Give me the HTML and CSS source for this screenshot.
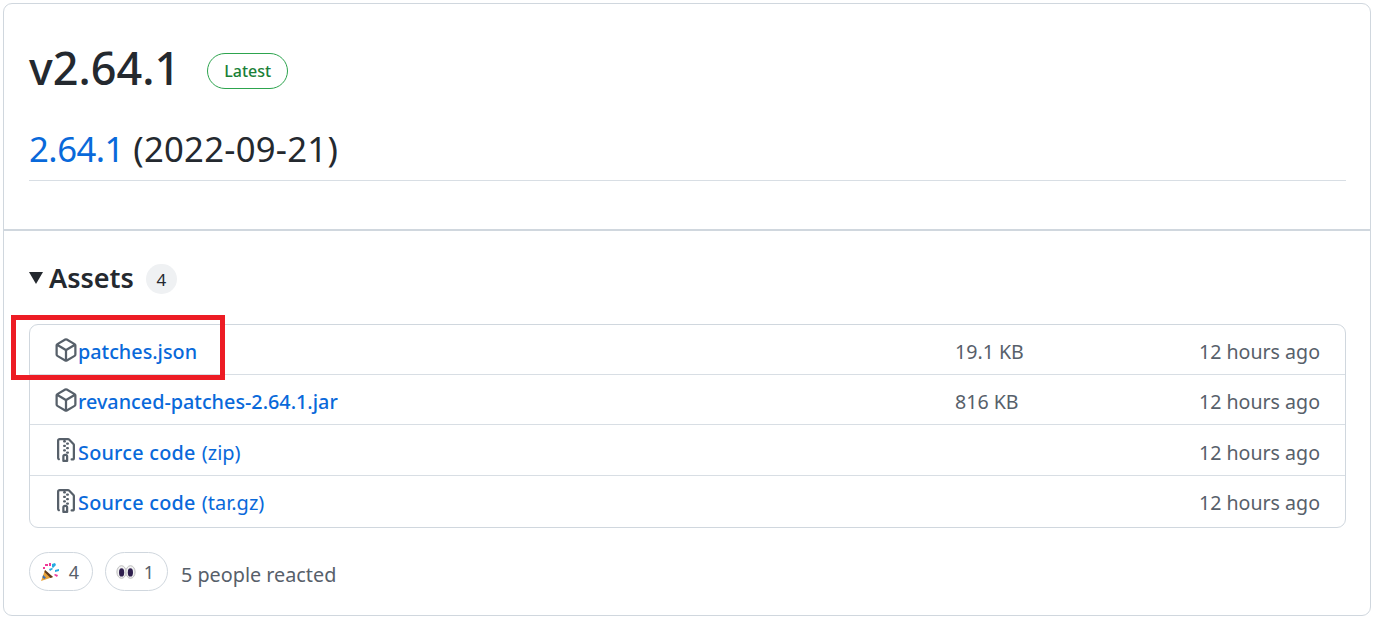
FILE: index.html
```html
<!DOCTYPE html>
<html lang="en">
<head>
<meta charset="utf-8">
<title>v2.64.1</title>
<link rel="stylesheet" href="styles.css">
</head>
<body>
<main class="card">
  <section class="head">
    <div class="title-row">
      <h1 class="title">v2.64.1</h1>
      <span class="label">Latest</span>
    </div>
    <h2 class="subtitle"><a class="link" href="#">2.64.1</a> (2022-09-21)</h2>
  </section>
  <section class="body">
    <div class="assets-head">
      <span class="caret"></span>
      <span class="assets-title">Assets</span>
      <span class="counter">4</span>
    </div>
    <ul class="assets">
      <li class="asset">
        <div class="name">
          <svg class="icon" viewBox="0 0 16 16"><path d="m8.878.392 5.25 3.045c.54.314.872.89.872 1.514v6.098a1.75 1.75 0 0 1-.872 1.514l-5.25 3.045a1.75 1.75 0 0 1-1.756 0l-5.25-3.045A1.75 1.75 0 0 1 1 11.049V4.951c0-.624.332-1.201.872-1.514L7.122.392a1.75 1.75 0 0 1 1.756 0ZM7.875 1.69l-4.63 2.685L8 7.133l4.755-2.758-4.63-2.685a.248.248 0 0 0-.25 0ZM2.5 5.677v5.372c0 .09.047.171.125.216l4.625 2.683V8.432Zm6.25 8.271 4.625-2.683a.25.25 0 0 0 .125-.216V5.677L8.75 8.432Z"/></svg>
          <a class="asset-link" href="#">patches.json</a>
        </div>
        <span class="size">19.1 KB</span>
        <span class="time">12 hours ago</span>
      </li>
      <li class="asset">
        <div class="name">
          <svg class="icon" viewBox="0 0 16 16"><path d="m8.878.392 5.25 3.045c.54.314.872.89.872 1.514v6.098a1.75 1.75 0 0 1-.872 1.514l-5.25 3.045a1.75 1.75 0 0 1-1.756 0l-5.25-3.045A1.75 1.75 0 0 1 1 11.049V4.951c0-.624.332-1.201.872-1.514L7.122.392a1.75 1.75 0 0 1 1.756 0ZM7.875 1.69l-4.63 2.685L8 7.133l4.755-2.758-4.63-2.685a.248.248 0 0 0-.25 0ZM2.5 5.677v5.372c0 .09.047.171.125.216l4.625 2.683V8.432Zm6.25 8.271 4.625-2.683a.25.25 0 0 0 .125-.216V5.677L8.75 8.432Z"/></svg>
          <a class="asset-link" href="#">revanced-patches-2.64.1.jar</a>
        </div>
        <span class="size">816 KB</span>
        <span class="time">12 hours ago</span>
      </li>
      <li class="asset">
        <div class="name">
          <svg class="icon" viewBox="0 0 16 16"><path d="M3.5 1.75v11.5c0 .09.048.173.126.217a.75.75 0 0 1-.752 1.298A1.748 1.748 0 0 1 2 13.25V1.75C2 .784 2.784 0 3.75 0h5.586c.464 0 .909.185 1.237.513l2.914 2.914c.329.328.513.773.513 1.237v8.586A1.75 1.75 0 0 1 12.25 15h-.5a.75.75 0 0 1 0-1.5h.5a.25.25 0 0 0 .25-.25V4.664a.25.25 0 0 0-.073-.177L9.513 1.573a.25.25 0 0 0-.177-.073H7.25a.75.75 0 0 1 0 1.5h-.5a.75.75 0 0 1 0-1.5h-3a.25.25 0 0 0-.25.25Zm3.75 8.75h.5c.966 0 1.75.784 1.75 1.75v3a.75.75 0 0 1-.75.75h-2.5a.75.75 0 0 1-.75-.75v-3c0-.966.784-1.75 1.75-1.75ZM6 5.25a.75.75 0 0 1 .75-.75h.5a.75.75 0 0 1 0 1.5h-.5A.75.75 0 0 1 6 5.25Zm.75 2.25h.5a.75.75 0 0 1 0 1.5h-.5a.75.75 0 0 1 0-1.5ZM8 6.75A.75.75 0 0 1 8.75 6h.5a.75.75 0 0 1 0 1.5h-.5A.75.75 0 0 1 8 6.75ZM8.75 3h.5a.75.75 0 0 1 0 1.5h-.5a.75.75 0 0 1 0-1.5ZM8 9.75A.75.75 0 0 1 8.75 9h.5a.75.75 0 0 1 0 1.5h-.5A.75.75 0 0 1 8 9.75Zm-1 2.5v2.25h1v-2.25a.25.25 0 0 0-.25-.25h-.5a.25.25 0 0 0-.25.25Z"/></svg>
          <a class="asset-link source" href="#">Source code</a>
          <a class="asset-ext" href="#">(zip)</a>
        </div>
        <span class="size"></span>
        <span class="time">12 hours ago</span>
      </li>
      <li class="asset">
        <div class="name">
          <svg class="icon" viewBox="0 0 16 16"><path d="M3.5 1.75v11.5c0 .09.048.173.126.217a.75.75 0 0 1-.752 1.298A1.748 1.748 0 0 1 2 13.25V1.75C2 .784 2.784 0 3.75 0h5.586c.464 0 .909.185 1.237.513l2.914 2.914c.329.328.513.773.513 1.237v8.586A1.75 1.75 0 0 1 12.25 15h-.5a.75.75 0 0 1 0-1.5h.5a.25.25 0 0 0 .25-.25V4.664a.25.25 0 0 0-.073-.177L9.513 1.573a.25.25 0 0 0-.177-.073H7.25a.75.75 0 0 1 0 1.5h-.5a.75.75 0 0 1 0-1.5h-3a.25.25 0 0 0-.25.25Zm3.75 8.75h.5c.966 0 1.75.784 1.75 1.75v3a.75.75 0 0 1-.75.75h-2.5a.75.75 0 0 1-.75-.75v-3c0-.966.784-1.75 1.75-1.75ZM6 5.25a.75.75 0 0 1 .75-.75h.5a.75.75 0 0 1 0 1.5h-.5A.75.75 0 0 1 6 5.25Zm.75 2.25h.5a.75.75 0 0 1 0 1.5h-.5a.75.75 0 0 1 0-1.5ZM8 6.75A.75.75 0 0 1 8.75 6h.5a.75.75 0 0 1 0 1.5h-.5A.75.75 0 0 1 8 6.75ZM8.75 3h.5a.75.75 0 0 1 0 1.5h-.5a.75.75 0 0 1 0-1.5ZM8 9.75A.75.75 0 0 1 8.75 9h.5a.75.75 0 0 1 0 1.5h-.5A.75.75 0 0 1 8 9.75Zm-1 2.5v2.25h1v-2.25a.25.25 0 0 0-.25-.25h-.5a.25.25 0 0 0-.25.25Z"/></svg>
          <a class="asset-link source" href="#">Source code</a>
          <a class="asset-ext" href="#">(tar.gz)</a>
        </div>
        <span class="size"></span>
        <span class="time">12 hours ago</span>
      </li>
    </ul>
    <div class="reactions">
      <button class="reaction" type="button">
        <svg class="emoji" viewBox="0 0 20 20">
          <path fill="#e8a33b" d="M1 19 5 8l8 7z"/>
          <path fill="#3c6fb4" d="M3.2 13 6 15.8 4.2 17 2.4 15.2z"/>
          <path fill="#5b3a23" d="M5 8l8 7-2.5 1L4.5 10z"/>
          <path fill="#ef3a9a" d="M5 2h3v2H5zM9 1h2v3H9zM3 5h2v2H3z"/>
          <path fill="#27aae1" d="M12 2l3-1 1 2-3 3-1-1zM15 8l4-1v2l-4 1zM9 7l3-1 1 1-3 2z"/>
          <path fill="#ef3a9a" d="M15 12l3 1-1 2-3-2z"/>
        </svg>
        <span class="count">4</span>
      </button>
      <button class="reaction" type="button">
        <svg class="emoji" viewBox="0 0 20 20">
          <ellipse cx="5.5" cy="10" rx="4.6" ry="6.3" fill="#f1f1f1" stroke="#bdbdbd" stroke-width="1"/>
          <ellipse cx="14.5" cy="10" rx="4.6" ry="6.3" fill="#f1f1f1" stroke="#bdbdbd" stroke-width="1"/>
          <ellipse cx="5.6" cy="10.4" rx="2.6" ry="4.2" fill="#2f1f4e"/>
          <ellipse cx="14.4" cy="10.4" rx="2.6" ry="4.2" fill="#2f1f4e"/>
        </svg>
        <span class="count">1</span>
      </button>
      <span class="reacted">5 people reacted</span>
    </div>
  </section>
  <div class="highlight"></div>
</main>
</body>
</html>
```

FILE: styles.css
```css
* { box-sizing: border-box; }
html, body { margin: 0; padding: 0; background: #fff; }
body {
  padding: 3px 7px 0 3px;
  font-family: "Noto Sans", "Open Sans", "Liberation Sans", sans-serif;
  font-size: 21px;
  color: #24292f;
}
.card {
  position: relative;
  width: 1368px;
  height: 613px;
  border: 1px solid #d0d7de;
  border-radius: 9px;
  display: flex;
  flex-direction: column;
}
.head {
  height: 227px;
  padding: 0 24px 0 25px;
  border-bottom: 2px solid #d0d7de;
}
.title-row {
  display: flex;
  align-items: center;
  height: 100px;
  padding-top: 27px;
  gap: 27px;
}
.title {
  margin: 0;
  font-size: 45px;
  font-weight: 550;
  line-height: 60px;
}
.label {
  display: flex;
  align-items: center;
  justify-content: center;
  width: 81px;
  height: 36px;
  margin-top: 7px;
  border: 1px solid #2da44e;
  border-radius: 18px;
  color: #1a7f37;
  font-size: 16px;
  font-weight: 500;
}
.subtitle {
  margin: 0;
  height: 77px;
  padding-top: 20px;
  border-bottom: 1px solid #d8dee4;
  font-size: 34.7px;
  font-weight: 400;
  line-height: 50px;
  letter-spacing: .25px;
  white-space: nowrap;
}
.link { color: #0969da; text-decoration: none; letter-spacing: -.5px; }
.body {
  flex: 1;
  padding: 0 25px;
}
.assets-head {
  display: flex;
  align-items: center;
  height: 93px;
}
.caret {
  width: 0;
  height: 0;
  margin-right: 6px;
  border-left: 7px solid transparent;
  border-right: 7px solid transparent;
  border-top: 12px solid #24292f;
}
.assets-title {
  font-size: 27px;
  font-weight: 600;
}
.counter {
  display: flex;
  align-items: center;
  justify-content: center;
  width: 31px;
  height: 30px;
  margin-left: 12px;
  margin-top: 3px;
  border-radius: 15px;
  background: #eff1f3;
  font-size: 17px;
}
.assets {
  list-style: none;
  margin: 0;
  padding: 0;
  width: 1317px;
  border: 1px solid #d0d7de;
  border-radius: 9px;
}
.asset {
  display: grid;
  grid-template-columns: 901px 174px 1fr;
  align-items: center;
  height: 50px;
  padding: 0 25px 0 24px;
  border-top: 1px solid #d8dee4;
}
.asset:first-child { border-top: 0; height: 49px; }
.asset:nth-child(3) { height: 51px; }
.asset:last-child { height: 52px; padding-bottom: 2px; }
.name {
  display: flex;
  align-items: center;
  white-space: nowrap;
}
.icon {
  width: 24px;
  height: 24px;
  flex: none;
  fill: #57606a;
}
.asset-link {
  padding-top: 4px;
  color: #0969da;
  font-weight: 500;
  font-size: 19.8px;
  text-decoration: none;
}
.source { letter-spacing: .25px; }
.asset-ext {
  padding-top: 4px;
  margin-left: 6px;
  color: #0969da;
  font-size: 20px;
  text-decoration: none;
}
.size, .time {
  padding-top: 4px;
  color: #57606a;
  font-size: 19.6px;
  white-space: nowrap;
}
.time { text-align: right; }
.reactions {
  display: flex;
  align-items: center;
  margin-top: 24px;
  gap: 12px;
}
.reaction {
  display: flex;
  align-items: center;
  justify-content: space-between;
  width: 64px;
  height: 39px;
  padding: 0 13px 0 10px;
  background: #fff;
  border: 1px solid #d0d7de;
  border-radius: 20px;
  font-family: inherit;
  font-size: 18px;
  color: #57606a;
}
.reaction + .reaction { width: 63px; }
.emoji { width: 20px; height: 20px; flex: none; }
.reacted {
  padding-top: 6px;
  margin-left: 1px;
  color: #57606a;
  font-size: 19.8px;
}
.highlight {
  position: absolute;
  left: 7px;
  top: 311px;
  width: 214px;
  height: 65px;
  border: 5px solid #ed1c24;
}
```
